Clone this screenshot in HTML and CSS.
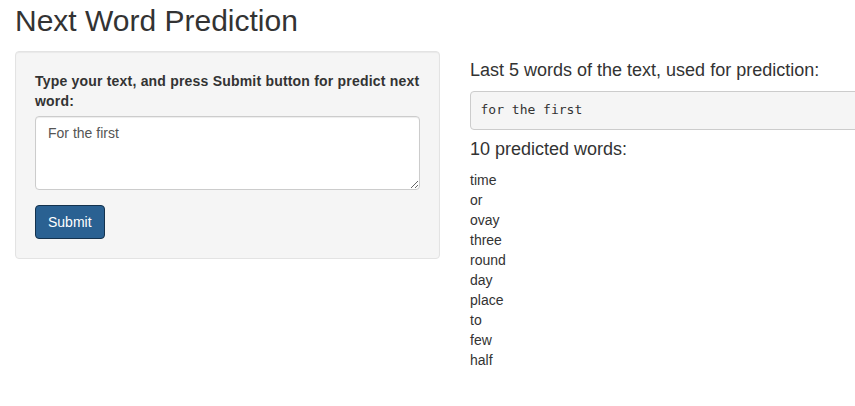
FILE: index.html
```html
<!DOCTYPE html>
<html>
<head>
<meta charset="utf-8">
<title>Next Word Prediction</title>
<link rel="stylesheet" href="styles.css">
</head>
<body>
<div class="container">
  <h2 class="title">Next Word Prediction</h2>
  <div class="row">
    <div class="col-left">
      <form class="well">
        <div class="form-group">
          <label class="label" for="text">Type your text, and press Submit button for predict next word:</label>
          <textarea id="text" class="input" rows="3">For the first</textarea>
        </div>
        <button type="button" class="btn">Submit</button>
      </form>
    </div>
    <div class="col-right">
      <h4 class="heading">Last 5 words of the text, used for prediction:</h4>
      <pre class="output">for the first</pre>
      <h4 class="heading">10 predicted words:</h4>
      <div class="words">
        <div>time</div>
        <div>or</div>
        <div>ovay</div>
        <div>three</div>
        <div>round</div>
        <div>day</div>
        <div>place</div>
        <div>to</div>
        <div>few</div>
        <div>half</div>
      </div>
    </div>
  </div>
</div>
</body>
</html>
```
FILE: styles.css
```css
html, body {
  margin: 0;
  padding: 0;
  overflow: hidden;
}
body {
  font-family: "Liberation Sans", Arial, Helvetica, sans-serif;
  font-size: 14px;
  line-height: 1.42857143;
  color: #333;
  background: #fff;
}
* { box-sizing: border-box; }

.container {
  padding: 0 15px;
  width: 1000px;
}
.title {
  font-family: "Liberation Sans", Arial, sans-serif;
  font-weight: 500;
  font-size: 30px;
  line-height: 1.1;
  margin: 4px 0 14px;
  color: #333;
}
.row {
  display: flex;
  margin: 0 -15px;
}
.col-left {
  width: 455px;
  flex: none;
  padding: 0 15px;
}
.col-right {
  width: 455px;
  flex: none;
  padding: 0 15px;
}
.well {
  margin: 0;
  padding: 19px;
  background: #f5f5f5;
  border: 1px solid #e3e3e3;
  border-radius: 4px;
  box-shadow: inset 0 1px 1px rgba(0,0,0,.05);
}
.form-group {
  margin-bottom: 15px;
}
.label {
  display: block;
  font-weight: bold;
  letter-spacing: 0.2px;
  margin-bottom: 5px;
  max-width: 100%;
}
.input {
  display: block;
  width: 100%;
  padding: 6px 12px;
  font-family: "Liberation Sans", Arial, sans-serif;
  font-size: 14px;
  line-height: 1.42857143;
  color: #555;
  background: #fff;
  border: 1px solid #ccc;
  border-radius: 4px;
  box-shadow: inset 0 1px 1px rgba(0,0,0,.075);
  margin: 0;
  height: 74px;
  resize: vertical;
}
.btn {
  display: inline-block;
  padding: 6px 12px;
  font-family: "Liberation Sans", Arial, sans-serif;
  font-size: 14px;
  line-height: 1.42857143;
  color: #fff;
  background: #2a6192;
  border: 1px solid #14324d;
  border-radius: 4px;
  margin: 0;
  cursor: pointer;
}
.heading {
  font-family: "Liberation Sans", Arial, sans-serif;
  font-weight: 500;
  font-size: 18px;
  line-height: 1.1;
  margin: 10px 0;
}
.output {
  display: block;
  margin: 0 0 10px;
  padding: 9.5px;
  font-family: "DejaVu Sans Mono", "Liberation Mono", monospace;
  font-size: 13px;
  line-height: 1.42857143;
  color: #333;
  background: #f5f5f5;
  border: 1px solid #ccc;
  border-radius: 4px;
  white-space: pre-wrap;
}
.words {
  line-height: 20px;
}
```
